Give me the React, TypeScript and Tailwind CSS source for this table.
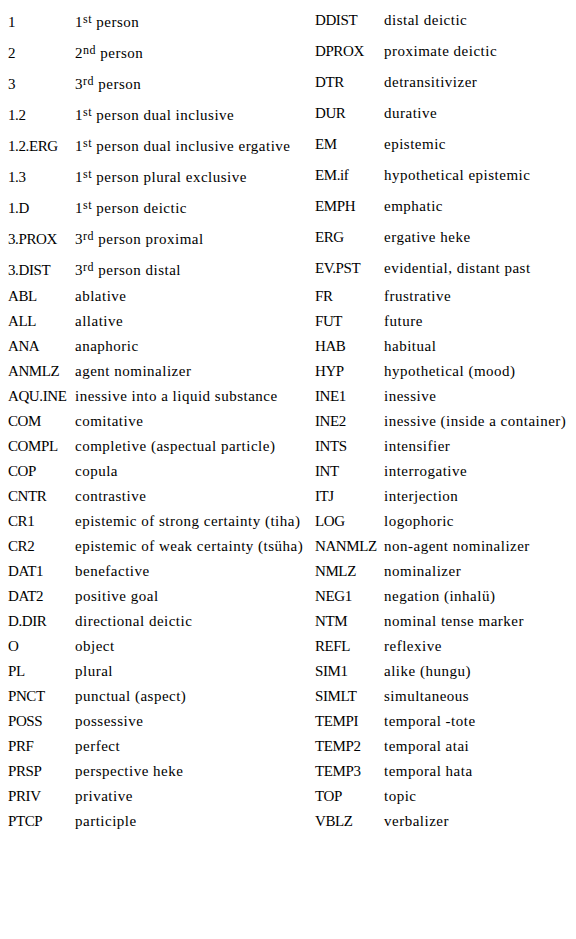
type Sup = { n: string; s: string; rest: string };

const top: [string, Sup, string, string][] = [
  ['1', { n: '1', s: 'st', rest: 'person' }, 'DDIST', 'distal deictic'],
  ['2', { n: '2', s: 'nd', rest: 'person' }, 'DPROX', 'proximate deictic'],
  ['3', { n: '3', s: 'rd', rest: 'person' }, 'DTR', 'detransitivizer'],
  ['1.2', { n: '1', s: 'st', rest: 'person dual inclusive' }, 'DUR', 'durative'],
  ['1.2.ERG', { n: '1', s: 'st', rest: 'person dual inclusive ergative' }, 'EM', 'epistemic'],
  ['1.3', { n: '1', s: 'st', rest: 'person plural exclusive' }, 'EM.if', 'hypothetical epistemic'],
  ['1.D', { n: '1', s: 'st', rest: 'person deictic' }, 'EMPH', 'emphatic'],
  ['3.PROX', { n: '3', s: 'rd', rest: 'person proximal' }, 'ERG', 'ergative heke'],
  ['3.DIST', { n: '3', s: 'rd', rest: 'person distal' }, 'EV.PST', 'evidential, distant past'],
];

const rest: [string, string, string, string][] = [
  ['ABL', 'ablative', 'FR', 'frustrative'],
  ['ALL', 'allative', 'FUT', 'future'],
  ['ANA', 'anaphoric', 'HAB', 'habitual'],
  ['ANMLZ', 'agent nominalizer', 'HYP', 'hypothetical (mood)'],
  ['AQU.INE', 'inessive into a liquid substance', 'INE1', 'inessive'],
  ['COM', 'comitative', 'INE2', 'inessive (inside a container)'],
  ['COMPL', 'completive (aspectual particle)', 'INTS', 'intensifier'],
  ['COP', 'copula', 'INT', 'interrogative'],
  ['CNTR', 'contrastive', 'ITJ', 'interjection'],
  ['CR1', 'epistemic of strong certainty (tiha)', 'LOG', 'logophoric'],
  ['CR2', 'epistemic of weak certainty (tsüha)', 'NANMLZ', 'non-agent nominalizer'],
  ['DAT1', 'benefactive', 'NMLZ', 'nominalizer'],
  ['DAT2', 'positive goal', 'NEG1', 'negation (inhalü)'],
  ['D.DIR', 'directional deictic', 'NTM', 'nominal tense marker'],
  ['O', 'object', 'REFL', 'reflexive'],
  ['PL', 'plural', 'SIM1', 'alike (hungu)'],
  ['PNCT', 'punctual (aspect)', 'SIMLT', 'simultaneous'],
  ['POSS', 'possessive', 'TEMPI', 'temporal -tote'],
  ['PRF', 'perfect', 'TEMP2', 'temporal atai'],
  ['PRSP', 'perspective heke', 'TEMP3', 'temporal hata'],
  ['PRIV', 'privative', 'TOP', 'topic'],
  ['PTCP', 'participle', 'VBLZ', 'verbalizer'],
];

export default function App() {
  return (
    <div className="min-h-[939px] bg-white text-black pt-[5px] pl-2 text-[15px] leading-[17px]" style={{ fontFamily: "'Liberation Serif', serif" }}>
      {top.map(([a, b, c, d]) => (
        <div key={a} className="grid grid-cols-[67px_240px_69px_1fr] items-center h-[31px] whitespace-nowrap">
          <span className="pt-1 tracking-[-0.4px]">{a}</span>
          <span className="pt-1 tracking-[0.5px]">
            {b.n}
            <sup className="text-[12px] relative -top-[4px]">{b.s}</sup> {b.rest}
          </span>
          <span className="tracking-[-0.4px]">{c}</span>
          <span className="tracking-[0.5px]">{d}</span>
        </div>
      ))}
      {rest.map(([a, b, c, d]) => (
        <div key={a} className="grid grid-cols-[67px_240px_69px_1fr] items-center h-[25px] whitespace-nowrap">
          <span className="tracking-[-0.4px]">{a}</span>
          <span className="tracking-[0.5px]">{b}</span>
          <span className="tracking-[-0.4px]">{c}</span>
          <span className="tracking-[0.5px]">{d}</span>
        </div>
      ))}
    </div>
  );
}
